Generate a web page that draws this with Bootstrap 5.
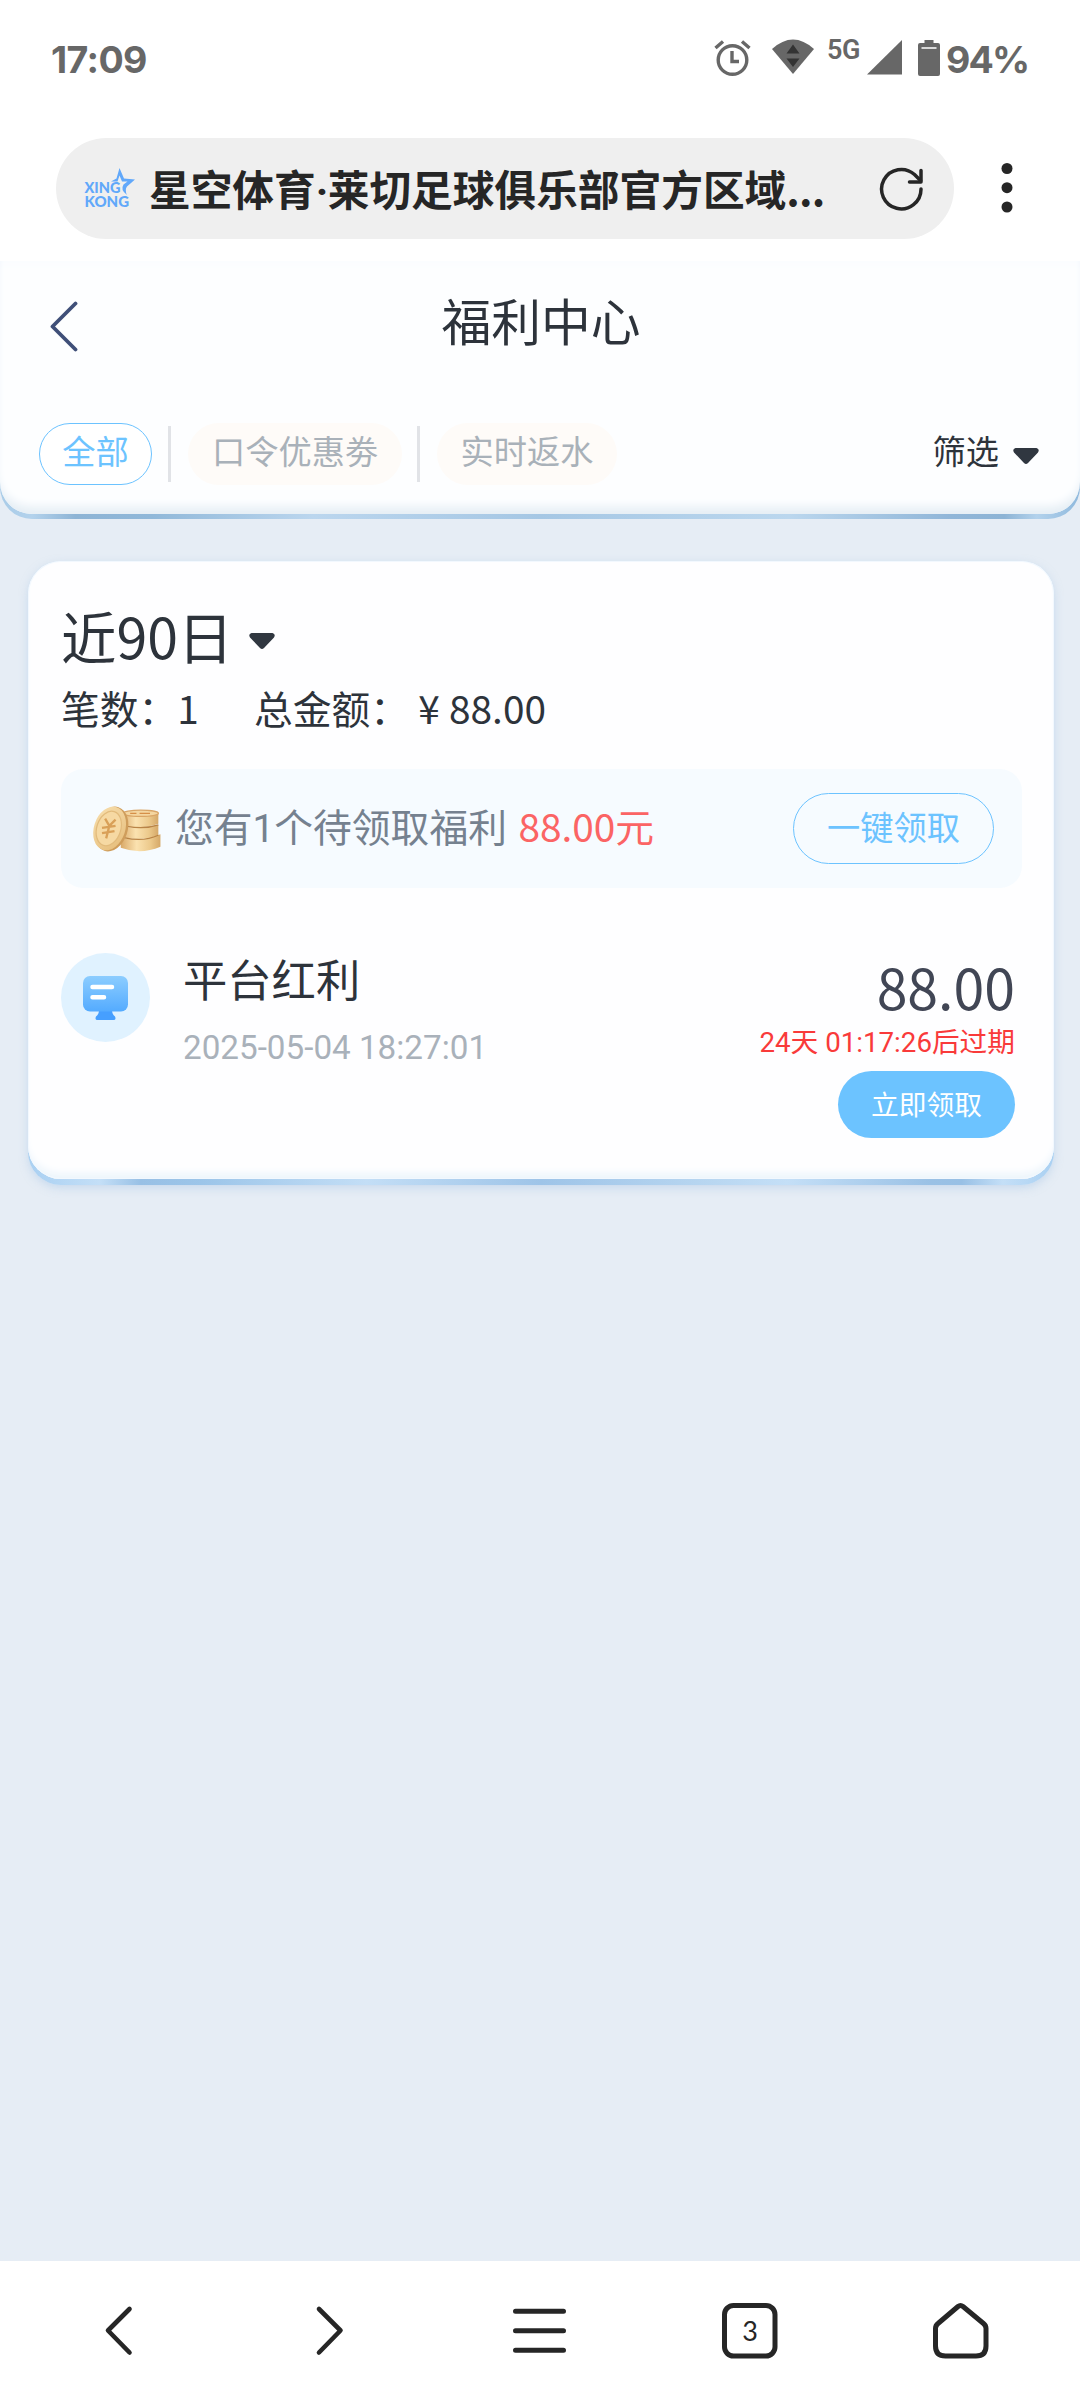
<!DOCTYPE html>
<html lang="zh-CN">
<head>
<meta charset="utf-8">
<meta name="viewport" content="width=device-width, initial-scale=1">
<title>福利中心</title>
<link href="https://cdn.jsdelivr.net/npm/bootstrap@5.3.0/dist/css/bootstrap.min.css" rel="stylesheet">
<style>
  :root { --sky: #6cc3ff; --ink: #2d333b; }
  body { font-family: "Noto Sans CJK SC", sans-serif; background: #e6edf5; color: var(--ink); height: 2400px; overflow: hidden; }
  svg { display: block; flex: none; }
  .status-bar { height: 138px; padding: 34px 52px 0 51px; color: #676767; }
  .status-text { font: 700 37.500px/51px Inter, sans-serif; letter-spacing: -.6px; }
  .battery-text { width: 82px; letter-spacing: -1.8px; white-space: nowrap; }
  .net-label { font: 600 27px/32px Roboto, sans-serif; letter-spacing: -.5px; width: 33px; }
  .url-row { height: 123px; padding-left: 56px; }
  .url-pill { width: 898px; height: 101px; border-radius: 51px; background: #efefef; padding: 0 31px 0 27px; }
  .url-title { font-size: 41.7px; line-height: 60px; font-weight: 700; color: #262626; white-space: nowrap; }
  .mid-dot { font-family: Roboto, sans-serif; display: inline-block; width: 12px; text-align: center; }
  .url-dots { letter-spacing: -.8px; }
  .top-shell { border-radius: 0 0 32px 32px; padding-bottom: 5px;
    background: linear-gradient(90deg,#a9cce8 0,#b3d2ec 3%,#8db4d5 7%,#90b8d9 14%,#bbd6ee 29%,#a5c7e4 50%,#bbd7ee 73%,#90b6d8 88%,#8db4d5 93%,#b3d2ec 96%,#8fb9dd 100%); }
  .top-panel { height: 253px; border-radius: 0 0 32px 32px; background: #fdfeff; box-shadow: inset 0 -11px 10px -4px #e5eef5, inset 0 8px 10px -6px #fafcff; }
  .page-title { font-size: 49.8px; line-height: 72px; }
  .tab-pill { height: 62px; border-radius: 31px; padding: 0 23.500px 0 24px; font-size: 33.23px; line-height: 54px; padding-bottom: 8px; color: #a9b1b9; background: #fefbf8; border: 0; }
  .tab-pill.on { color: var(--sky); background: #fff; border: 1px solid var(--sky); width: 113px; padding: 0 0 8px; line-height: 52px; }
  .tab-rule { width: 3px; height: 56px; background: #e1e3e7; }
  .t33 { font-size: 33.23px; line-height: 48px; }
  .t39 { font-size: 38.77px; line-height: 56px; }
  .yen { display: inline-block; width: 40px; text-align: center; }
  .card-shell { margin: 42px 26px 0 28px; border-radius: 33px; padding-bottom: 6px;
    background: linear-gradient(90deg,#a9d0f2 0,#c4dff7 7%,#98c0e5 11%,#9cc5e9 17%,#c3def6 33%,#9ec4e8 50%,#b9d7f1 67%,#c4dff7 74%,#9ac1e5 88%,#98c0e5 91%,#c4dff7 95%,#a9d0f2 100%);
    box-shadow: 0 3px 9px rgba(170,200,232,.5); }
  .card-panel { height: 618px; border-radius: 33px; padding: 0 33px; background: #fefeff; box-shadow: inset 0 0 0 1px #f2f8fe, inset 0 -9px 9px -4px #eaf4fb; }
  .range-text { font-size: 55.4px; line-height: 80px; }
  .notice { height: 119px; border-radius: 22px; background: #f6fbff; padding: 0 28px 0 28px; margin-right: -1px; }
  .notice-msg { color: #75818f; font-family: Roboto, "Noto Sans CJK SC", sans-serif; }
  .notice-sum { color: #fb6464; font-family: "Noto Sans CJK SC", sans-serif; margin-left: 2px; }
  .claim-all { width: 201px; height: 71px; border-radius: 36px; border: 1px solid var(--sky); color: var(--sky); font-size: 33.23px; line-height: 64px; }
  .claim-one { width: 177px; height: 67px; border-radius: 34px; background: var(--sky); color: #fff; font-size: 27.7px; line-height: 65px; }
  .item-name { font-size: 44.3px; line-height: 64px; }
  .item-date { font: 400 33.23px/40px Roboto, sans-serif; color: #a9b1ba; }
  .item-sum { font-size: 55.4px; line-height: 64px; color: #414655; }
  .item-left { font: 400 27.7px/40px Roboto, "Noto Sans CJK SC", sans-serif; color: #f93a3a; }
  .dock { height: 139px; background: #fff; }
  .dock > div { width: 210.5px; }
</style>
</head>
<body class="d-flex flex-column">
<div class="bg-white">
  <div class="status-bar d-flex justify-content-between align-items-start">
    <span class="status-text">17:09</span>
    <div class="d-flex align-items-start">
      <svg width="38" height="38" viewBox="0 0 38 38" style="margin:4px 21px 0 0" fill="none" stroke="#676767" stroke-width="3.4"><circle cx="19.5" cy="22" r="14.3"/><path d="M19 13v10.500h7M10 3.500 2.500 10M29 3.500 36.500 10" /></svg>
      <svg width="42" height="36" viewBox="0 0 42 36" style="margin:5px 13px 0 0"><path d="M0 10Q21-9 42 10L21 35Z" fill="#676767"/><path d="M14.500 14.500 21 5.500l6.500 9zM14.500 19.500h13L21 28z" fill="#333"/></svg>
      <span class="net-label">5G</span>
      <svg width="36" height="36" viewBox="0 0 36 36" style="margin:6px 15px 0 7px"><path d="M0 34.500 35 0v34.500z" fill="#676767"/></svg>
      <svg width="22" height="37" viewBox="0 0 22 37" style="margin:6px 6px 0 0"><path d="M6.500 0h9v3H20q2 0 2 2v29q0 2-2 2H2q-2 0-2-2V5q0-2 2-2h4.500z" fill="#676767"/><path d="M3.500 8h15" stroke="#eee" stroke-width="1.700"/></svg>
      <span class="status-text battery-text">94%</span>
    </div>
  </div>
  <div class="url-row d-flex align-items-start">
    <div class="url-pill d-flex align-items-center">
      <svg width="54" height="48" viewBox="0 0 54 48" fill="#61a8fa"><path d="M28 16.500 33.500 13.500 36.500 3 41 13.500 52 14.500 44 21.500Q41.500 25 44 30Q37 25 40.500 19.500L44.500 16.500 39 16.500 36.500 10.500 34.500 16.500Z"/><text x="1.500" y="27.500" font-family="Lato, sans-serif" font-size="14.500" font-weight="900" textLength="36" lengthAdjust="spacingAndGlyphs">XING</text><text x="1.500" y="42" font-family="Lato, sans-serif" font-size="15" font-weight="900" textLength="44.500" lengthAdjust="spacingAndGlyphs">KONG</text></svg>
      <span class="url-title" style="margin:2px 0 0 12px">星空体育<span class="mid-dot">·</span>莱切足球俱乐部官方区域<span class="url-dots">...</span></span>
      <svg class="ms-auto" width="44" height="44" viewBox="0 0 44 44" fill="none" stroke="#262626" stroke-width="3.500" stroke-linecap="round" stroke-linejoin="round"><path d="M42 22A19.700 19.700 0 1 1 35.500 7.500L41.500 13.500"/><path d="M42 3.500V15H30.500"/></svg>
    </div>
    <svg width="12" height="52" viewBox="0 0 12 52" style="margin:24px 0 0 47px" fill="#262626"><circle cx="6" cy="6.500" r="5.500"/><circle cx="6" cy="25.700" r="5.500"/><circle cx="6" cy="45" r="5.500"/></svg>
  </div>
</div>

<header class="top-shell">
  <div class="top-panel d-flex flex-column">
    <div class="position-relative d-flex justify-content-center" style="padding:22px 0 2px 2px">
      <svg class="position-absolute" width="30" height="52" viewBox="0 0 30 52" style="left:49px;top:39px" fill="none" stroke="#3f4f78" stroke-width="3.800" stroke-linecap="round" stroke-linejoin="round"><path d="M26.500 3.500 3.500 26.500 26.500 49.500"/></svg>
      <h1 class="page-title fw-normal m-0">福利中心</h1>
    </div>
    <nav class="d-flex align-items-center" style="padding:66px 41px 0 39px">
      <button class="tab-pill on">全部</button>
      <i class="tab-rule" style="margin:0 17px 0 16px"></i>
      <button class="tab-pill">口令优惠劵</button>
      <i class="tab-rule" style="margin:0 17px 0 15px"></i>
      <button class="tab-pill">实时返水</button>
      <span class="t33 ms-auto" style="margin-top:-9px">筛选</span>
      <svg width="26" height="17" viewBox="0 0 26 17" style="margin:4px 0 0 14px"><path d="M2.500 0h21q3.500 1 1.500 4.500L15 15q-2 2.200-4 0L1 4.500Q-1 1 2.500 0z" fill="#303740"/></svg>
    </nav>
  </div>
</header>

<main class="flex-grow-1">
  <section class="card-shell">
    <div class="card-panel">
      <div class="d-flex align-items-center" style="padding-top:34px">
        <span class="range-text">近90日</span>
        <svg width="26" height="17" viewBox="0 0 26 17" style="margin:12px 0 0 16px"><path d="M2.500 0h21q3.500 1 1.500 4.500L15 15q-2 2.200-4 0L1 4.500Q-1 1 2.500 0z" fill="#303740"/></svg>
      </div>
      <div class="t39 d-flex" style="margin-top:4px"><span style="width:193px">笔数：1</span><span>总金额：<span class="yen">¥</span>88.00</span></div>
      <div class="notice d-flex align-items-center" style="margin-top:34px">
        <svg width="74" height="48" viewBox="0 0 70 46">
          <defs>
            <linearGradient id="gold"><stop offset="0" stop-color="#d9a968"/><stop offset=".4" stop-color="#fbe2b0"/><stop offset=".75" stop-color="#ecc98b"/><stop offset="1" stop-color="#d5a868"/></linearGradient>
            <linearGradient id="face" x2="1" y2="1"><stop offset="0" stop-color="#f8dfae"/><stop offset="1" stop-color="#e5bc79"/></linearGradient>
          </defs>
          <g fill="url(#gold)"><path d="M30 31q17 5 38-3v12q-19 8-38 1z"/><path d="M30 20q17 4 36-1v10q-17 6-36 2z"/><path d="M30 8q17 4 36-1v11q-17 6-36 2z"/></g>
          <g fill="none" stroke="#b98446" stroke-width="1.200"><path d="M36 20.500q17 3 30-1.500M34 31.500q18 4 32-2.500"/></g>
          <ellipse cx="49" cy="8" rx="17" ry="3" fill="#f4d6a0" stroke="#d9a566" stroke-width="1.200"/>
          <path d="M39 8h6m3 0h10" stroke="#d68f48" stroke-width="1.300"/>
          <ellipse cx="21" cy="23" rx="15.500" ry="22" transform="rotate(18 21 23)" fill="#cf9d5b"/>
          <ellipse cx="19.300" cy="22.500" rx="15" ry="21.500" transform="rotate(18 19.300 22.500)" fill="url(#face)"/>
          <ellipse cx="18.500" cy="22.500" rx="11.500" ry="17" transform="rotate(18 18.500 22.500)" fill="#f6d9a3" stroke="#e2bb7c" stroke-width="1.200"/>
          <path d="M15 13l4 7 6-6M12 22l13-2M12 27l12-2M19 20l-3 12" fill="none" stroke="#d9a058" stroke-width="2.200"/>
        </svg>
        <span class="t39 notice-msg" style="margin:0 0 4px 12px">您有1个待领取福利 <span class="notice-sum">88.00元</span></span>
        <button class="claim-all bg-transparent ms-auto" style="padding:0 0 7px">一键领取</button>
      </div>
      <div class="d-flex align-items-start" style="margin-top:65px">
        <svg width="89" height="89" viewBox="0 0 89 89">
          <defs><linearGradient id="screen" x2="0" y2="1"><stop offset="0" stop-color="#8ccdff"/><stop offset="1" stop-color="#54abff"/></linearGradient></defs>
          <circle cx="44.500" cy="44.500" r="44.500" fill="#e0f2ff"/>
          <path d="M38 57h13q0 4 3 6.500 1.500 3.500-1.500 3.500h-16q-3 0-1.500-3.500 3-2.500 3-6.500z" fill="#469fff"/>
          <rect x="22" y="23" width="45" height="35.500" rx="7" fill="url(#screen)"/>
          <path d="M31.500 34H51M31.500 44.300H43" stroke="#fff" stroke-width="4.500" stroke-linecap="round"/>
        </svg>
        <div style="margin:-7px 0 0 33px"><div class="item-name">平台红利</div><div class="item-date" style="margin-top:18px">2025-05-04 18:27:01</div></div>
        <div class="d-flex flex-column align-items-end ms-auto" style="margin:1px 6px 0 0">
          <div class="item-sum">88.00</div>
          <div class="item-left" style="margin-top:5px">24天 01:17:26后过期</div>
          <button class="claim-one border-0" style="margin-top:8px;padding:0 0 2px">立即领取</button>
        </div>
      </div>
    </div>
  </section>
</main>

<footer class="dock d-flex justify-content-center align-items-center">
  <div><svg class="mx-auto" width="60" height="60" viewBox="0 0 60 60" fill="none" stroke="#262626" stroke-width="4.600" stroke-linecap="round" stroke-linejoin="round"><path d="M40.500 8 19 29.500 40.500 51.500"/></svg></div>
  <div><svg class="mx-auto" width="60" height="60" viewBox="0 0 60 60" fill="none" stroke="#262626" stroke-width="4.600" stroke-linecap="round" stroke-linejoin="round"><path d="M19 8 40.500 29.500 19 51.500"/></svg></div>
  <div><svg class="mx-auto" width="60" height="60" viewBox="0 0 60 60" fill="none" stroke="#262626" stroke-width="5" stroke-linecap="round"><path d="M5.500 10.200h48M5.500 29.700h48M5.500 49.200h48"/></svg></div>
  <div><svg class="mx-auto" width="60" height="60" viewBox="0 0 60 60"><rect x="3.500" y="4.500" width="50.500" height="50.500" rx="9" fill="none" stroke="#262626" stroke-width="5"/><text x="29" y="40" font-family="Lato, sans-serif" font-size="27" text-anchor="middle" fill="#262626">3</text></svg></div>
  <div><svg class="mx-auto" width="60" height="60" viewBox="0 0 60 60" fill="none" stroke="#262626" stroke-width="5" stroke-linejoin="round"><path d="M27 5.500q2.500-2 5 0L52.500 22.500q2.500 2 2.500 5V45q0 10-10 10H14.500q-10 0-10-10V27.500q0-3 2.500-5z"/></svg></div>
</footer>
<script src="https://cdn.jsdelivr.net/npm/bootstrap@5.3.0/dist/js/bootstrap.bundle.min.js"></script>
</body>
</html>
